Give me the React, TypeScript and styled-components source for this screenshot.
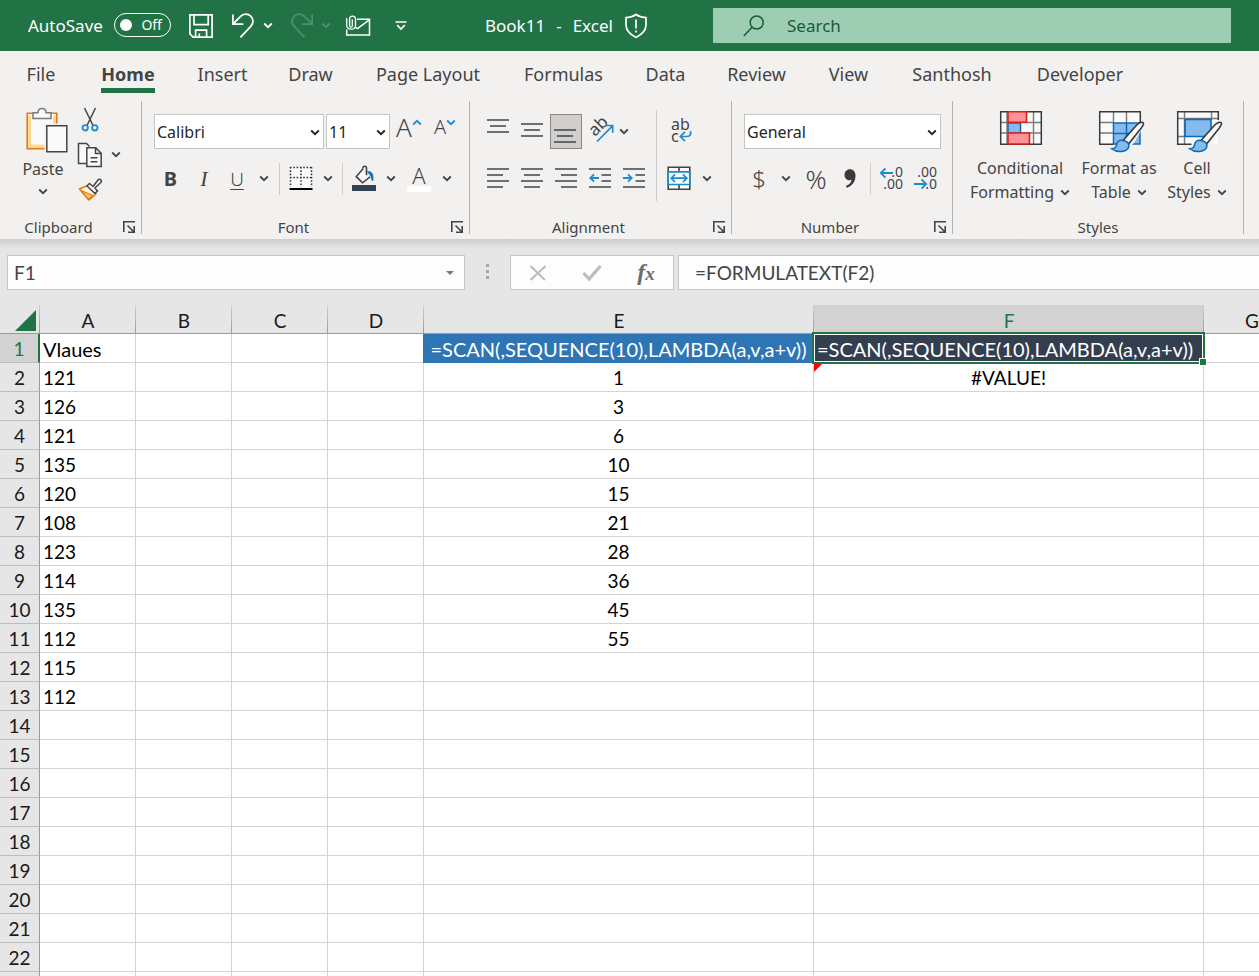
import React from "react";
import styled, { createGlobalStyle, css } from "styled-components";

const UI_FONT = '"Noto Sans", "Open Sans", sans-serif';
const SHEET_FONT = 'Lato, "Noto Sans", sans-serif';
const GREEN = "#217346";
const INK = "#444444";
const BLUE = "#1e8bcd";

const GlobalStyle = createGlobalStyle`
  *, *::before, *::after { box-sizing: border-box; }
  body { margin: 0; font-family: ${UI_FONT}; color: ${INK}; background: #fff; }
  button, input, select { font: inherit; color: inherit; margin: 0; }
  button { border: 0; padding: 0; background: none; cursor: pointer; }
  svg { display: block; flex: none; overflow: visible; }
`;

const Shell = styled.div`
  display: flex;
  flex-direction: column;
  height: 100vh;
  overflow: hidden;
`;

/* ---------- title bar ---------- */

const TitleBar = styled.header`
  display: flex;
  align-items: center;
  flex: none;
  height: 51px;
  padding-right: 28px;
  background: ${GREEN};
  color: #fff;
  font-size: 17px;
  line-height: 24px;
`;

const QuickAccess = styled.div`
  display: flex;
  align-items: center;
  flex: none;
  width: 485px;
  padding-left: 28px;
`;

const AutoSave = styled.label`
  width: 86px;
  white-space: nowrap;
`;

const Toggle = styled.button`
  display: flex;
  align-items: center;
  justify-content: space-between;
  width: 57px;
  height: 24px;
  margin: 0 6px 2px 0;
  padding: 0 8px 0 5px;
  border: 1px solid #fff;
  border-radius: 12px;
  font-size: 14px;
  line-height: 20px;
  &::before {
    content: "";
    width: 12px;
    height: 12px;
    border-radius: 50%;
    background: #fff;
  }
`;

const TitleButton = styled.button<{ $w: number; $dim?: boolean }>`
  display: flex;
  align-items: center;
  justify-content: center;
  width: ${(p) => p.$w}px;
  height: 36px;
  color: ${(p) => (p.$dim ? "#4e9069" : "#fff")};
`;

const HistoryButton = styled(TitleButton)`
  margin-right: 9px;
`;

const DocTitle = styled.div`
  display: flex;
  align-items: center;
  flex: none;
  gap: 11px;
  width: 228px;
  white-space: pre;
`;

const SearchBox = styled.label`
  display: flex;
  align-items: center;
  flex: 1;
  gap: 22px;
  height: 35px;
  padding-left: 30px;
  background: #9fcdb3;
  color: #185c37;
`;

const SearchInput = styled.input`
  flex: 1;
  min-width: 0;
  border: 0;
  outline: 0;
  padding: 0;
  background: transparent;
  &::placeholder { color: #185c37; opacity: 1; }
`;

/* ---------- ribbon ---------- */

const Ribbon = styled.section`
  flex: none;
  background: #f3f1f0;
`;

const TabList = styled.nav`
  display: flex;
  height: 50px;
  padding-left: 4px;
`;

const Tab = styled.button<{ $w: number; $active?: boolean }>`
  display: flex;
  justify-content: center;
  align-items: flex-start;
  width: ${(p) => p.$w}px;
  padding-top: 11px;
  font-size: 18px;
  line-height: 24px;
  white-space: nowrap;
  span {
    padding-bottom: 2px;
    border-bottom: 5px solid transparent;
    ${(p) =>
      p.$active &&
      css`
        border-color: ${GREEN};
        font-weight: 700;
      `}
  }
`;

const Groups = styled.div`
  display: flex;
  height: 138px;
`;

const GroupBox = styled.div<{ $w: number }>`
  display: flex;
  flex-direction: column;
  flex: none;
  width: ${(p) => p.$w}px;
`;

const GroupBody = styled.div`
  display: flex;
  flex: 1;
  padding-left: 12px;
`;

const GroupFooter = styled.div`
  display: flex;
  align-items: center;
  height: 24px;
  font-size: 15px;
  line-height: 20px;
  text-align: center;
`;

const GroupLabel = styled.span`
  flex: 1;
`;

const Divider = styled.div`
  flex: none;
  width: 1px;
  height: 133px;
  background: #b4b2b0;
`;

const ThinDivider = styled.div<{ $tall?: boolean }>`
  flex: none;
  width: 1px;
  height: ${(p) => (p.$tall ? 91 : 32)}px;
  margin: ${(p) => (p.$tall ? "9px 4px 0" : "0 4px")};
  background: #cfcdcc;
`;

const Rows = styled.div`
  display: flex;
  flex-direction: column;
  gap: 12px;
  padding-top: 13px;
`;

const Row = styled.div<{ $gap?: number }>`
  display: flex;
  align-items: center;
  gap: ${(p) => p.$gap ?? 0}px;
  height: 35px;
`;

const Tool = styled.button<{ $w: number; $pressed?: boolean }>`
  display: flex;
  align-items: center;
  justify-content: center;
  flex: none;
  width: ${(p) => p.$w}px;
  height: 35px;
  ${(p) =>
    p.$pressed &&
    css`
      background: #d0cfce;
      border: 1px solid #8a8886;
    `}
`;

const LauncherButton = styled.button`
  display: flex;
  align-items: center;
  justify-content: center;
  width: 24px;
  height: 24px;
`;

const Glyph = styled.span<{ $size: number; $bold?: boolean; $italic?: boolean; $under?: boolean }>`
  font-family: ${(p) => (p.$italic ? '"Liberation Serif", serif' : UI_FONT)};
  font-size: ${(p) => p.$size}px;
  line-height: 24px;
  font-weight: ${(p) => (p.$bold ? 700 : 300)};
  font-style: ${(p) => (p.$italic ? "italic" : "normal")};
  text-decoration: ${(p) => (p.$under ? "underline" : "none")};
  text-underline-offset: 3px;
`;

const LetterWithMark = styled.span<{ $size: number }>`
  display: flex;
  align-items: flex-start;
  font-size: ${(p) => p.$size}px;
  font-weight: 300;
  line-height: 24px;
  height: 33px;
  svg { margin-top: 4px; }
`;

const ColorLetter = styled.span`
  display: flex;
  flex-direction: column;
  align-items: center;
  font-size: 22px;
  font-weight: 300;
  line-height: 21px;
  &::after {
    content: "";
    width: 24px;
    height: 6px;
    background: #fff;
  }
`;

const SelectWrap = styled.span<{ $w: number }>`
  position: relative;
  flex: none;
  width: ${(p) => p.$w}px;
  height: 35px;
  svg {
    position: absolute;
    right: 4px;
    top: 15px;
    pointer-events: none;
  }
`;

const Select = styled.select`
  appearance: none;
  width: 100%;
  height: 100%;
  padding: 0 16px 0 2px;
  border: 1px solid #c6c4c3;
  border-radius: 0;
  background: #fff;
  color: #262626;
  font-size: 16px;
`;

const PasteButton = styled.button`
  display: flex;
  flex-direction: column;
  align-items: center;
  width: 62px;
  height: 106px;
  padding-top: 6px;
  font-size: 16px;
  line-height: 24px;
  svg + span { margin: 4px 0 7px; }
`;

const SmallColumn = styled.div`
  display: flex;
  flex-direction: column;
  padding-top: 1px;
`;

const StyleButton = styled.button<{ $w: number }>`
  display: flex;
  flex-direction: column;
  align-items: center;
  width: ${(p) => p.$w}px;
  padding-top: 9px;
  font-size: 16px;
  line-height: 24px;
  white-space: nowrap;
`;

const WithCaret = styled.span`
  display: flex;
  align-items: center;
  gap: 6px;
`;

/* ---------- formula bar ---------- */

const FormulaBar = styled.div`
  display: flex;
  flex: none;
  height: 66px;
  padding: 16px 0 0 7px;
  background: linear-gradient(#cdcdcd, #e6e6e6 9px);
  font-family: ${SHEET_FONT};
  font-size: 19px;
`;

const FieldBox = styled.div<{ $w?: number }>`
  display: flex;
  align-items: center;
  flex: ${(p) => (p.$w ? "none" : "1")};
  width: ${(p) => (p.$w ? `${p.$w}px` : "auto")};
  height: 35px;
  border: 1px solid #c6c6c6;
  background: #fdfdfd;
`;

const FormulaBox = styled(FieldBox)`
  margin-left: 4px;
  border-right: 0;
`;

const FieldInput = styled.input<{ $pad: number }>`
  flex: 1;
  min-width: 0;
  height: 33px;
  border: 0;
  outline: 0;
  padding: 0 0 0 ${(p) => p.$pad}px;
  background: transparent;
`;

const Grip = styled.div`
  display: flex;
  justify-content: center;
  align-items: center;
  width: 45px;
  height: 33px;
`;

const FormulaTool = styled.button`
  display: flex;
  justify-content: center;
  width: 54px;
`;

const Fx = styled.span`
  font: italic 700 24px/28px "Liberation Serif", serif;
  color: #6b6b6b;
  small { font-size: 19px; }
`;

/* ---------- worksheet ---------- */

const SheetArea = styled.main`
  flex: 1;
  min-height: 0;
  overflow: hidden;
`;

const Sheet = styled.table`
  table-layout: fixed;
  width: 1300px;
  border-collapse: separate;
  border-spacing: 0;
  font-family: ${SHEET_FONT};
  font-size: 19px;
  line-height: 26px;
  color: #000;
`;

const ColHead = styled.th<{ $active?: boolean }>`
  height: 29px;
  padding: 3px 0 0;
  border-bottom: 1px solid #9b9b9b;
  background:
    linear-gradient(#d0d0d0, #9b9b9b) right / 1px 100% no-repeat,
    ${(p) => (p.$active ? "#d2d2d2" : "#e6e6e6")};
  color: ${(p) => (p.$active ? GREEN : "#1a1a1a")};
  font-weight: 400;
  line-height: 25px;
`;

const Corner = styled(ColHead)`
  svg { margin-left: 15px; }
`;

const RowHead = styled.th<{ $active?: boolean }>`
  height: 29px;
  padding: 2px 0 0;
  border-right: ${(p) => (p.$active ? `2px solid ${GREEN}` : "1px solid #9b9b9b")};
  border-bottom: 1px solid #bcbcbc;
  background: ${(p) => (p.$active ? "#d2d2d2" : "#e6e6e6")};
  color: ${(p) => (p.$active ? GREEN : "#1a1a1a")};
  font-weight: 400;
`;

const Cell = styled.td<{ $center?: boolean; $fill?: string; $bleed?: boolean; $heading?: boolean }>`
  position: relative;
  height: 29px;
  padding: 2px 3px 0;
  border-right: 1px solid #d4d4d4;
  border-bottom: 1px solid #d4d4d4;
  font-size: ${(p) => (p.$heading ? 20 : 19)}px;
  text-align: ${(p) => (p.$center ? "center" : "left")};
  white-space: nowrap;
  ${(p) =>
    p.$fill &&
    css`
      background: ${p.$fill};
      border-color: ${p.$fill};
      color: #fff;
    `}
  ${(p) => p.$bleed && css`box-shadow: -1px 0 0 ${p.$fill};`}
`;

const SelectionFrame = styled.span`
  position: absolute;
  inset: -2px;
  z-index: 1;
  border: 2px solid ${GREEN};
  box-shadow: inset 0 0 0 1px #fff;
  &::after {
    content: "";
    position: absolute;
    right: -3px;
    bottom: -3px;
    width: 6px;
    height: 6px;
    background: ${GREEN};
    box-shadow: 0 0 0 1px #fff;
  }
`;

const ErrorFlag = styled.span`
  position: absolute;
  left: 0;
  top: 0;
  width: 9px;
  height: 9px;
  background: #ff0000;
  clip-path: polygon(0 0, 100% 0, 0 100%);
`;

/* ---------- icons ---------- */

const Caret = ({ color = "currentColor", up = false }: { color?: string; up?: boolean }) => (
  <svg width="10" height="7" viewBox="0 0 10 7" fill="none" stroke={color} strokeWidth="1.8" aria-hidden>
    <path d={up ? "M1.2 5.5 5 1.8l3.8 3.7" : "M1.2 1.5 5 5.2l3.8-3.7"} />
  </svg>
);

const SaveIcon = () => (
  <svg width="24" height="24" viewBox="0 0 24 24" fill="none" stroke="currentColor" strokeWidth="1.7" aria-hidden>
    <path d="M.9.9h22.2v22.2H4.2L.9 19.8zM5 1v9.6h14.2V1M6.6 23v-6.9h11V23M10.3 23v-3.6" />
  </svg>
);

const UndoIcon = ({ flip = false }: { flip?: boolean }) => (
  <svg width="24" height="26" viewBox="0 0 24 26" fill="none" stroke="currentColor" strokeWidth="1.8" aria-hidden>
    <g transform={flip ? "translate(24 0) scale(-1 1)" : undefined}>
      <path d="M1.9 1.5v9.7h10.4M2 11 9.6 3.4A7.1 7.1 0 0 1 20 13.2L9.4 24.4" />
    </g>
  </svg>
);

const MailIcon = () => (
  <svg width="26" height="22" viewBox="0 0 26 22" fill="none" stroke="currentColor" strokeWidth="1.5" aria-hidden>
    <path d="M12 4.300h12.500v15.800H1.700v-5.600M24.300 4.800 12.500 13.500l-1.800-1.200" />
    <path d="M7.300 4.200v6.500c0 2-2.700 2-2.700 0V4c0-3.800 5.900-3.800 5.900 0v6.400c0 5-8.800 5-8.800 0V3" strokeWidth="1.300" />
  </svg>
);

const CustomizeIcon = () => (
  <svg width="12" height="10" viewBox="0 0 12 10" fill="none" stroke="currentColor" strokeWidth="1.7" aria-hidden>
    <path d="M.5 1h11M2.2 4.2 6 8l3.8-3.8" />
  </svg>
);

const ShieldIcon = () => (
  <svg width="24" height="26" viewBox="0 0 24 26" fill="none" stroke="currentColor" strokeWidth="1.7" aria-hidden>
    <path d="M12 1.500c2.800 2 6.200 3 10 3v7.600c0 5.900-4.200 9.600-10 12.300C6.200 21.700 2 18 2 12.100V4.500c3.800 0 7.200-1 10-3zM12 6.500v9M12 17.500v2" />
  </svg>
);

const SearchIcon = () => (
  <svg width="22" height="24" viewBox="0 0 22 24" fill="none" stroke="currentColor" strokeWidth="1.5" aria-hidden>
    <circle cx="13.700" cy="8.500" r="6.500" />
    <path d="M9 13.200.8 22" />
  </svg>
);

const LauncherIcon = () => (
  <svg width="12" height="12" viewBox="0 0 12 12" fill="none" stroke="currentColor" strokeWidth="1.600" aria-hidden>
    <path d="M.8 11V.8H12M4.500 4.500l6 6M11.200 5v6.200H5" />
  </svg>
);

const PasteIcon = () => (
  <svg width="50" height="46" viewBox="0 0 50 46" fill="none" aria-hidden>
    <path d="M9 6.500h30v35H9z" fill="#fafafa" />
    <path d="M11 8.500v31h18M37 18V8.500" stroke="#fbd990" strokeWidth="4" />
    <path d="M16 6.300H9.200v35.500H27M33 6.300h5.800V17" stroke="#e07b16" strokeWidth="1.600" />
    <path d="M15 11.500V5.700h5c0-5.600 8-5.600 8 0h5v5.800z" fill="#fafafa" stroke="#7b7a79" strokeWidth="1.500" />
    <path d="M26.500 16.500h23v29h-23z" fill="#f3f1f0" />
    <path d="M28.800 18.800h20v26h-20z" fill="#fafafa" stroke="#444" strokeWidth="1.500" />
  </svg>
);

const CutIcon = () => (
  <svg width="18" height="25" viewBox="0 0 18 25" fill="none" aria-hidden>
    <path d="M3.500 1 12 18.500M14.500 1 6 18.500" stroke="#444" strokeWidth="1.500" />
    <circle cx="4.200" cy="20.800" r="2.700" stroke={BLUE} strokeWidth="1.800" />
    <circle cx="13.800" cy="20.800" r="2.700" stroke={BLUE} strokeWidth="1.800" />
  </svg>
);

const CopyIcon = () => (
  <svg width="26" height="25" viewBox="0 0 26 25" fill="#fafafa" stroke="#444" strokeWidth="1.500" aria-hidden>
    <path d="M9.500 21.500H1.500V1.500h8l3 3" />
    <path d="M9.800 5.800h9l5.400 5.400v13.300H9.800zM18.500 6v5.500H24M13.500 15.800h7M13.500 19.800h7" />
  </svg>
);

const BrushIcon = () => (
  <svg width="25" height="23" viewBox="0 0 25 23" fill="none" strokeLinejoin="round" aria-hidden>
    <path d="M9.500 7.500 1.500 11 11 22l7-6z" fill="#fff5e0" stroke="#e07b16" strokeWidth="1.600" />
    <path d="m3 12.500 12 5-4.500 4z" fill="#fbc45c" stroke="#e07b16" strokeWidth="1.200" />
    <path d="m9 8 2.500-2.500 3.500 3 5-6.500c1.800-2 4.500.5 2.800 2.500l-6 5.500 2.700 3L17 15.500z" fill="#fafafa" stroke="#444" strokeWidth="1.500" />
  </svg>
);

const BordersIcon = () => (
  <svg width="24" height="25" viewBox="0 0 24 25" fill="none" stroke="#333" strokeWidth="1.500" aria-hidden>
    <path d="M1 1h22v21H1z" fill="#fafafa" stroke="none" />
    <path d="M1 1.500h22M1 11.500h22M1.500 1v20M12 1v20M22.500 1v20" strokeDasharray="1.600 1.700" />
    <path d="M.5 23h23" stroke="#000" strokeWidth="2" />
  </svg>
);

const FillIcon = () => (
  <svg width="26" height="27" viewBox="0 0 26 27" fill="none" aria-hidden>
    <path d="M11 5.500 19 13l-7.500 5.500-6-6.500z" fill="#fafafa" />
    <path d="M12 3.500v-.7c0-2 3.500-2 3.500 0v7.400M12 3.800 5.300 11.600l6.200 6.200 7.500-6" stroke="#444" strokeWidth="1.600" />
    <path d="M16.500 6.800c4-.8 6.500 2 5.200 9.200-1.700-1.500-1-4.500-2.500-6z" fill="#1a73c2" stroke="#1a73c2" />
    <path d="M1 20h24v6H1z" fill="#33404f" />
  </svg>
);

type AlignKind = "left" | "center" | "right" | "top" | "outdent" | "indent";

const linePaths: Record<AlignKind, string> = {
  top: "M1 1h22M4 7h16M1 13h22",
  left: "M1 1h22M1 7h16M1 13h22M1 19h16",
  center: "M1 1h22M4 7h16M1 13h22M4 19h16",
  right: "M1 1h22M7 7h16M1 13h22M7 19h16",
  outdent: "M1 1h22M13.500 7h9.500M13.500 13h9.500M1 19h22",
  indent: "M1 1h22M13.500 7h9.500M13.500 13h9.500M1 19h22",
};

const LinesIcon = ({ kind, dy = 0 }: { kind: AlignKind; dy?: number }) => (
  <svg width="24" height="31" viewBox={`1 ${-5 - dy} 24 31`} fill="none" strokeWidth="1.600" aria-hidden>
    <path d={linePaths[kind]} stroke="#444" />
    {kind === "outdent" && <path d="M11 10H2M6 6.300 2.300 10 6 13.700" stroke={BLUE} strokeWidth="1.800" />}
    {kind === "indent" && <path d="M1 10h8.500M6 6.300 9.700 10 6 13.700" stroke={BLUE} strokeWidth="1.800" />}
  </svg>
);

const OrientationIcon = () => (
  <svg width="28" height="29" viewBox="0 0 28 29" fill="none" aria-hidden>
    <text x="0" y="0" fontSize="17" fill="#444" transform="translate(9 20) rotate(-45)">ab</text>
    <path d="M11 24.500 26.500 8.800M19.500 8.500h7.200v7.200" stroke={BLUE} strokeWidth="1.700" />
  </svg>
);

const WrapIcon = () => (
  <svg width="26" height="29" viewBox="0 0 26 29" fill="none" aria-hidden>
    <text x="3" y="13" fontSize="16" fill="#444">ab</text>
    <text x="3" y="25" fontSize="16" fill="#444">c</text>
    <path d="M22.500 14c1 4-1 5.500-4 5.500h-5.500M17 14.800l-4.700 4.700 4.700 4.700" stroke={BLUE} strokeWidth="1.700" />
  </svg>
);

const MergeIcon = () => (
  <svg width="24" height="25" viewBox="0 0 24 25" fill="#fafafa" aria-hidden>
    <path d="M1.200 1.200h21.600v22H1.200zM12 1v22" stroke="#444" strokeWidth="1.600" />
    <path d="M1.200 5.800h21.600v12.700H1.200z" stroke={BLUE} strokeWidth="1.700" />
    <path d="M4.500 12.200h15M8 8.400l-3.800 3.800L8 16M16 8.400l3.800 3.800L16 16" fill="none" stroke={BLUE} strokeWidth="1.700" />
  </svg>
);

const CommaIcon = () => (
  <svg width="12" height="19" viewBox="0 0 12 19" fill="#3b3a39" aria-hidden>
    <path d="M5.800.2C9.300.2 11.500 2.700 11.500 6.700c0 5.500-3 10.200-8.800 12l-.8-1.700c3.500-1.400 5.300-3.600 5.600-6.300-.6.300-1.300.5-2.200.5C2.500 11.200.5 8.700.5 5.700S2.700.2 5.800.2z" />
  </svg>
);

const DecimalIcon = ({ more = false }: { more?: boolean }) => (
  <svg width="26" height="27" viewBox="0 0 26 27" fill="none" aria-hidden>
    <g fontSize="14" fill="#444">
      <text x="24" y="12" textAnchor="end">{more ? ".0" : ".00"}</text>
      <text x="24" y="24" textAnchor="end">{more ? ".00" : ".0"}</text>
    </g>
    {more ? (
      <path d="M14 8H2M6.500 3.300 1.800 8l4.700 4.700" stroke={BLUE} strokeWidth="1.800" />
    ) : (
      <path d="M1 19h12M8.500 14.300l4.700 4.700-4.700 4.700" stroke={BLUE} strokeWidth="1.800" />
    )}
  </svg>
);

const ConditionalIcon = () => (
  <svg width="46" height="46" viewBox="-2 0 46 46" fill="none" aria-hidden>
    <path d="M2 2h40v32H2z" fill="#fafafa" />
    <path d="M8 2v32M34.500 2v32M2 12.500h40M2 23h40" stroke="#7b7a79" strokeWidth="1.400" />
    <path d="M1.700 1.700h40.600v32.600H1.700z" stroke="#3b3a39" strokeWidth="1.500" />
    <path d="M9 13h12.500v10H9z" fill="#84bbec" stroke="#1068b8" strokeWidth="1.500" />
    <path d="M9 1.700h18.500v10.600H9zM9 23h21.500v11H9z" fill="#ff9297" stroke="#d6231c" strokeWidth="1.600" />
  </svg>
);

const PaintBrush = () => (
  <g>
    <path d="M46 11.500 24 33 12 40l16 1 8-8 11-19z" fill="#f3f1f0" />
    <path d="M45.300 12.800c-1.600-1.600-5 .5-7 2.700L25.500 30l5 4 12.600-15.800c1.500-2 3-4.400 2.200-5.400z" fill="#fafafa" stroke="#3b3a39" strokeWidth="1.600" />
    <path d="M25 30.500c-3.500-.8-6 1-6.500 4.500-.4 2.500-2 3.600-4.500 3.800 6 4.500 17.800 3.500 16.800-4.500-.8-2.300-3.300-3.300-5.800-3.800z" fill="#84bbec" stroke="#1068b8" strokeWidth="1.600" />
  </g>
);

const TableStyleIcon = () => (
  <svg width="50" height="46" viewBox="-4 0 50 46" fill="none" aria-hidden>
    <path d="M2 2h40v32H2z" fill="#fafafa" />
    <path d="M15.500 13H42v21H15.500z" fill="#84bbec" />
    <path d="M15.500 2v11M28.500 2v11M2 12.500h13M2 23h13" stroke="#7b7a79" strokeWidth="1.400" />
    <path d="M15.500 34V13H42v21zM28.500 13v21M15.500 23.500H42" stroke="#1068b8" strokeWidth="1.500" />
    <path d="M42.300 13V1.700H1.700v32.600h13.800" stroke="#3b3a39" strokeWidth="1.500" />
    <PaintBrush />
  </svg>
);

const CellStyleIcon = () => (
  <svg width="50" height="46" viewBox="-4 0 50 46" fill="none" aria-hidden>
    <path d="M2 2h40v32H2z" fill="#fafafa" />
    <path d="M8.500 2v32M35.500 2v8M2 8.500h40M2 26.500h8" stroke="#7b7a79" strokeWidth="1.400" />
    <path d="M9 9.500h26v17H9z" fill="#84bbec" stroke="#1068b8" strokeWidth="1.600" />
    <path d="M42.300 10V1.700H1.700v32.600h13.800" stroke="#3b3a39" strokeWidth="1.500" />
    <PaintBrush />
  </svg>
);

/* ---------- composed parts ---------- */

const MenuCaret = ({ label, w = 20 }: { label: string; w?: number }) => (
  <Tool $w={w} aria-label={label}>
    <Caret />
  </Tool>
);

const Picker = ({ label, value, w }: { label: string; value: string; w: number }) => (
  <SelectWrap $w={w}>
    <Select aria-label={label} defaultValue={value}>
      <option>{value}</option>
    </Select>
    <Caret color="#222" />
  </SelectWrap>
);

const Group = ({
  label,
  w,
  launcher = true,
  children,
}: {
  label: string;
  w: number;
  launcher?: boolean;
  children: React.ReactNode;
}) => (
  <>
    <GroupBox $w={w} role="group" aria-label={label}>
      <GroupBody>{children}</GroupBody>
      <GroupFooter>
        <GroupLabel>{label}</GroupLabel>
        {launcher && (
          <LauncherButton aria-label={`${label} settings`}>
            <LauncherIcon />
          </LauncherButton>
        )}
      </GroupFooter>
    </GroupBox>
    <Divider />
  </>
);

const tabs: [string, number][] = [
  ["File", 74],
  ["Home", 100],
  ["Insert", 89],
  ["Draw", 87],
  ["Page Layout", 148],
  ["Formulas", 123],
  ["Data", 81],
  ["Review", 101],
  ["View", 83],
  ["Santhosh", 124],
  ["Developer", 132],
];

const columns = ["A", "B", "C", "D", "E", "F", "G"];
const columnWidths = [96, 96, 96, 96, 390, 390, 96];
const formula = "=SCAN(,SEQUENCE(10),LAMBDA(a,v,a+v))";
const sheetData: Record<string, (string | number)[]> = {
  A: ["Vlaues", 121, 126, 121, 135, 120, 108, 123, 114, 135, 112, 115, 112],
  E: [formula, 1, 3, 6, 10, 15, 21, 28, 36, 45, 55],
  F: [formula, "#VALUE!"],
};
const headingFill: Record<string, string> = { E: "#2e75b6", F: "#333f4f" };
const rowNumbers = Array.from({ length: 23 }, (_, i) => i + 1);

const SheetCell = ({ col, row }: { col: string; row: number }) => (
  <Cell
    $heading={row === 1}
    $center={col === "E" || (col === "F" && row > 1)}
    $fill={row === 1 ? headingFill[col] : undefined}
    $bleed={col === "E" && row === 1}
  >
    {sheetData[col]?.[row - 1]}
    {col === "F" && row === 1 && <SelectionFrame />}
    {col === "F" && row === 2 && <ErrorFlag />}
  </Cell>
);

export default function App() {
  return (
    <Shell>
      <GlobalStyle />
      <TitleBar>
        <QuickAccess>
          <AutoSave htmlFor="autosave">AutoSave</AutoSave>
          <Toggle id="autosave" role="switch" aria-checked={false}>
            Off
          </Toggle>
          <TitleButton $w={48} aria-label="Save"><SaveIcon /></TitleButton>
          <TitleButton $w={36} aria-label="Undo"><UndoIcon /></TitleButton>
          <HistoryButton $w={14} aria-label="Undo history"><Caret /></HistoryButton>
          <TitleButton $w={35} $dim aria-label="Redo"><UndoIcon flip /></TitleButton>
          <HistoryButton $w={14} $dim aria-label="Redo history"><Caret /></HistoryButton>
          <TitleButton $w={32} aria-label="Email"><MailIcon /></TitleButton>
          <TitleButton $w={54} aria-label="Customize quick access"><CustomizeIcon /></TitleButton>
        </QuickAccess>
        <DocTitle>
          <span>Book11</span>
          <span>-</span>
          <span>Excel</span>
          <ShieldIcon />
        </DocTitle>
        <SearchBox>
          <SearchIcon />
          <SearchInput placeholder="Search" aria-label="Search" />
        </SearchBox>
      </TitleBar>

      <Ribbon>
        <TabList>
          {tabs.map(([name, w]) => (
            <Tab key={name} $w={w} $active={name === "Home"}>
              <span>{name}</span>
            </Tab>
          ))}
        </TabList>
        <Groups>
          <Group label="Clipboard" w={141}>
            <PasteButton>
              <PasteIcon />
              <span>Paste</span>
              <Caret />
            </PasteButton>
            <SmallColumn>
              <Row><Tool $w={32} aria-label="Cut"><CutIcon /></Tool></Row>
              <Row>
                <Tool $w={32} aria-label="Copy"><CopyIcon /></Tool>
                <MenuCaret label="Copy options" />
              </Row>
              <Row><Tool $w={32} aria-label="Format painter"><BrushIcon /></Tool></Row>
            </SmallColumn>
          </Group>

          <Group label="Font" w={327}>
            <Rows>
              <Row $gap={2}>
                <Picker label="Font name" value="Calibri" w={170} />
                <Picker label="Font size" value="11" w={64} />
                <Tool $w={34} aria-label="Increase font size">
                  <LetterWithMark $size={26}>A<Caret color={BLUE} up /></LetterWithMark>
                </Tool>
                <Tool $w={34} aria-label="Decrease font size">
                  <LetterWithMark $size={20}>A<Caret color={BLUE} /></LetterWithMark>
                </Tool>
              </Row>
              <Row>
                <Tool $w={33} aria-label="Bold"><Glyph $size={20} $bold>B</Glyph></Tool>
                <Tool $w={34} aria-label="Italic"><Glyph $size={22} $italic>I</Glyph></Tool>
                <Tool $w={32} aria-label="Underline"><Glyph $size={19} $under>U</Glyph></Tool>
                <MenuCaret label="Underline options" w={22} />
                <ThinDivider />
                <Tool $w={34} aria-label="Borders"><BordersIcon /></Tool>
                <MenuCaret label="Border options" />
                <ThinDivider />
                <Tool $w={34} aria-label="Fill color"><FillIcon /></Tool>
                <MenuCaret label="Fill options" />
                <Tool $w={36} aria-label="Font color"><ColorLetter>A</ColorLetter></Tool>
                <MenuCaret label="Font color options" />
              </Row>
            </Rows>
          </Group>

          <Group label="Alignment" w={261}>
            <Rows>
              <Row>
                <Tool $w={34} aria-label="Top align"><LinesIcon kind="top" dy={-2} /></Tool>
                <Tool $w={34} aria-label="Middle align"><LinesIcon kind="top" dy={2} /></Tool>
                <Tool $w={32} $pressed aria-label="Bottom align"><LinesIcon kind="top" dy={8} /></Tool>
                <Tool $w={36} aria-label="Orientation"><OrientationIcon /></Tool>
                <MenuCaret label="Orientation options" w={12} />
              </Row>
              <Row>
                <Tool $w={34} aria-label="Align left"><LinesIcon kind="left" /></Tool>
                <Tool $w={34} aria-label="Center"><LinesIcon kind="center" /></Tool>
                <Tool $w={34} aria-label="Align right"><LinesIcon kind="right" /></Tool>
                <Tool $w={34} aria-label="Decrease indent"><LinesIcon kind="outdent" /></Tool>
                <Tool $w={34} aria-label="Increase indent"><LinesIcon kind="indent" /></Tool>
              </Row>
            </Rows>
            <ThinDivider $tall />
            <Rows>
              <Row><Tool $w={40} aria-label="Wrap text"><WrapIcon /></Tool></Row>
              <Row>
                <Tool $w={36} aria-label="Merge and center"><MergeIcon /></Tool>
                <MenuCaret label="Merge options" />
              </Row>
            </Rows>
          </Group>

          <Group label="Number" w={220}>
            <Rows>
              <Row><Picker label="Number format" value="General" w={197} /></Row>
              <Row>
                <Tool $w={30} aria-label="Accounting format"><Glyph $size={24}>$</Glyph></Tool>
                <MenuCaret label="Accounting options" w={24} />
                <Tool $w={36} aria-label="Percent style"><Glyph $size={26}>%</Glyph></Tool>
                <Tool $w={32} aria-label="Comma style"><CommaIcon /></Tool>
                <ThinDivider />
                <Tool $w={34} aria-label="Increase decimal"><DecimalIcon more /></Tool>
                <Tool $w={34} aria-label="Decrease decimal"><DecimalIcon /></Tool>
              </Row>
            </Rows>
          </Group>

          <Group label="Styles" w={290} launcher={false}>
            <StyleButton $w={110}>
              <ConditionalIcon />
              <span>Conditional</span>
              <WithCaret>Formatting <Caret /></WithCaret>
            </StyleButton>
            <StyleButton $w={88}>
              <TableStyleIcon />
              <span>Format as</span>
              <WithCaret>Table <Caret /></WithCaret>
            </StyleButton>
            <StyleButton $w={68}>
              <CellStyleIcon />
              <span>Cell</span>
              <WithCaret>Styles <Caret /></WithCaret>
            </StyleButton>
          </Group>
        </Groups>
      </Ribbon>

      <FormulaBar>
        <FieldBox $w={458}>
          <FieldInput $pad={6} aria-label="Name box" defaultValue="F1" />
          <Tool $w={28} aria-label="Names">
            <svg width="8" height="4" viewBox="0 0 8 4" fill="#777" aria-hidden><path d="M0 0h8L4 4z" /></svg>
          </Tool>
        </FieldBox>
        <Grip>
          <svg width="3" height="16" viewBox="0 0 3 16" fill="#a6a6a6" aria-hidden>
            <path d="M0 0h3v3H0zM0 6h3v3H0zM0 12h3v3H0z" />
          </svg>
        </Grip>
        <FieldBox $w={164}>
          <FormulaTool aria-label="Cancel">
            <svg width="18" height="16" viewBox="0 0 18 16" stroke="#bdbdbd" strokeWidth="2.200" aria-hidden>
              <path d="M1.500 1 16 15M16.500 1 1.500 15" />
            </svg>
          </FormulaTool>
          <FormulaTool aria-label="Enter">
            <svg width="20" height="18" viewBox="0 0 20 18" fill="none" stroke="#bdbdbd" strokeWidth="3.200" aria-hidden>
              <path d="M1.500 9 7 15 18.500 2" />
            </svg>
          </FormulaTool>
          <FormulaTool aria-label="Insert function">
            <Fx>f<small>x</small></Fx>
          </FormulaTool>
        </FieldBox>
        <FormulaBox>
          <FieldInput $pad={16} aria-label="Formula" defaultValue="=FORMULATEXT(F2)" />
        </FormulaBox>
      </FormulaBar>

      <SheetArea>
        <Sheet>
          <colgroup>
            <col style={{ width: 40 }} />
            {columnWidths.map((w, i) => (
              <col key={columns[i]} style={{ width: w }} />
            ))}
          </colgroup>
          <thead>
            <tr>
              <Corner aria-label="Select all">
                <svg width="21" height="21" viewBox="0 0 21 21" fill={GREEN} aria-hidden><path d="M21 0v21H0z" /></svg>
              </Corner>
              {columns.map((c) => (
                <ColHead key={c} scope="col" $active={c === "F"}>{c}</ColHead>
              ))}
            </tr>
          </thead>
          <tbody>
            {rowNumbers.map((r) => (
              <tr key={r}>
                <RowHead scope="row" $active={r === 1}>{r}</RowHead>
                {columns.map((c) => (
                  <SheetCell key={c} col={c} row={r} />
                ))}
              </tr>
            ))}
          </tbody>
        </Sheet>
      </SheetArea>
    </Shell>
  );
}
